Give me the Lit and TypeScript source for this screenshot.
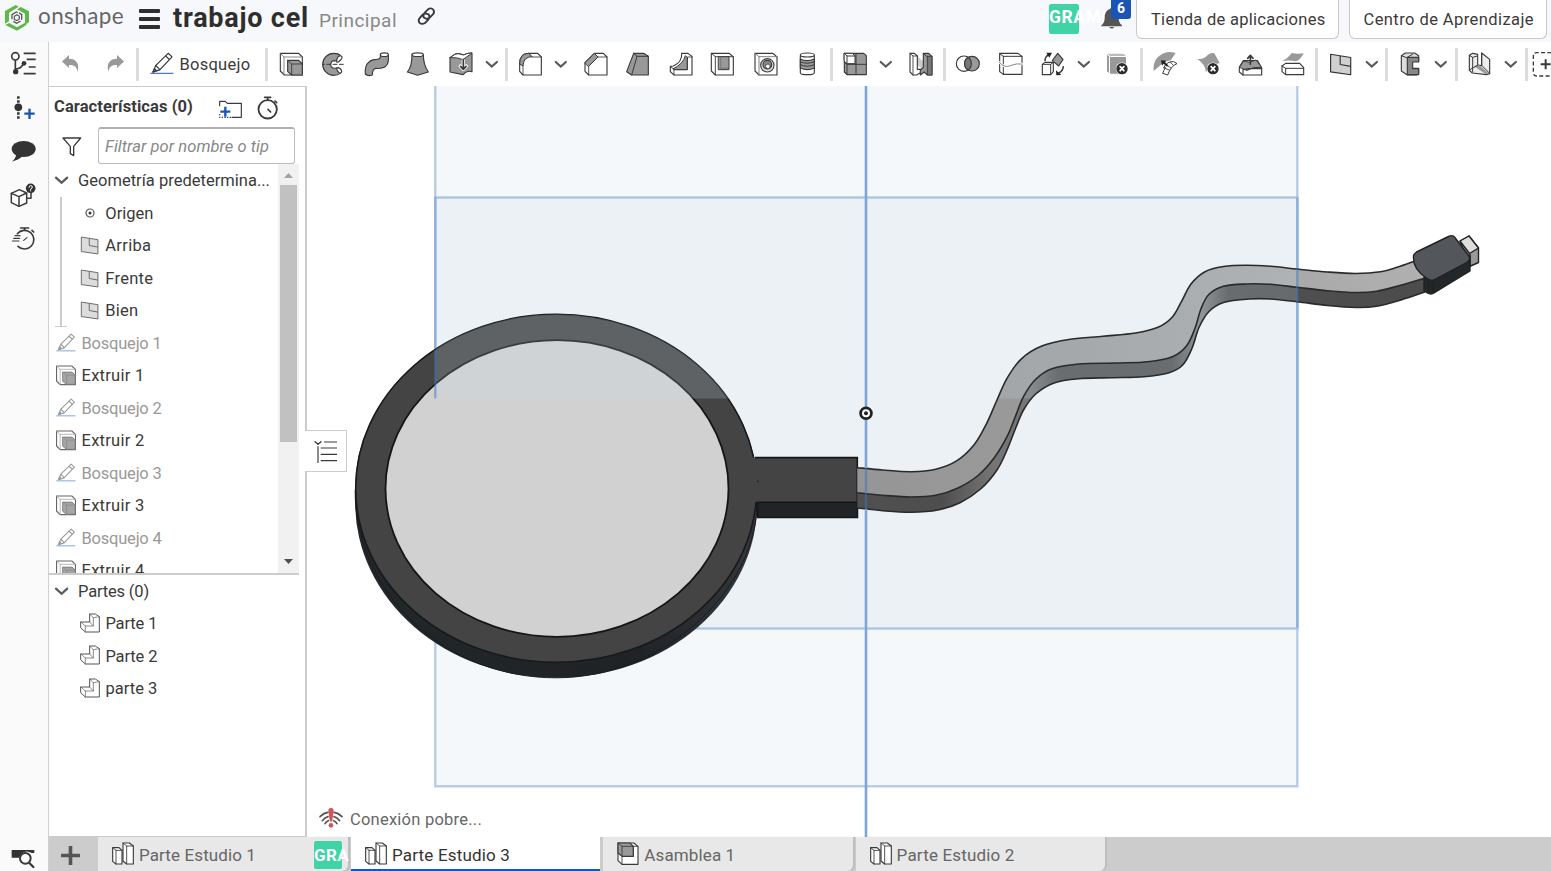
import { LitElement, html, svg, css } from "lit";
import { customElement, property } from "lit/decorators.js";

type Pt = [number, number];

/* Text run set to a given measure by spreading its tracking. */
@customElement("fit-text")
class FitText extends LitElement {
  @property({ type: Number }) w = 0;
  @property() text = "";
  static styles = css`
    :host { display: inline-block; white-space: pre; }
  `;
  render() {
    return html`<span class="run">${this.text}</span>`;
  }
  updated() {
    const run = this.renderRoot.querySelector(".run") as HTMLElement;
    run.style.letterSpacing = "0px";
    const natural = run.getBoundingClientRect().width;
    if (this.w && natural) run.style.letterSpacing = `${(this.w - natural) / this.text.length}px`;
  }
}

const t = (text: string, w: number) => html`<fit-text .text=${text} .w=${w}></fit-text>`;

/* Smooth curve through a list of points. */
const spline = (p: Pt[], move = true) => {
  let d = move ? `M${p[0]}` : `L${p[0]}`;
  for (let i = 0; i < p.length - 1; i++) {
    const a = p[Math.max(0, i - 1)], b = p[i], c = p[i + 1], e = p[Math.min(p.length - 1, i + 2)];
    d += `C${b[0] + (c[0] - a[0]) / 6},${b[1] + (c[1] - a[1]) / 6} ${c[0] - (e[0] - b[0]) / 6},${c[1] - (e[1] - b[1]) / 6} ${c[0]},${c[1]}`;
  }
  return d;
};

const cableTop: Pt[] = [[857.3,467.7],[882.7,470],[911,471.7],[935.7,469.3],[957,460.7],[974.5,444.3],[986.7,423.3],[997,400],[1007,378.3],[1021.4,358.8],[1041.8,346],[1070.4,339.3],[1103,336.3],[1135.7,333],[1158,327.3],[1172.4,317],[1181.4,301.7],[1191,284],[1205,271.7],[1223.5,266.5],[1246,265.2],[1270.4,266.3],[1297,269],[1327.5,272],[1356,273.5],[1380.6,271.7],[1397,267.3],[1415,261]];
const cableMid: Pt[] = [[857.3,492.7],[882.7,495.3],[911,497],[935.7,495.3],[958,488],[978.6,475],[995,456.7],[1007,436.7],[1015.3,416.7],[1023.5,396.7],[1035.7,379.3],[1052,368.8],[1078.6,364],[1115.3,363],[1148,361.7],[1172.4,356.7],[1186.7,345.7],[1195,328.3],[1201,308.8],[1209,294.3],[1223.5,286.2],[1246,284],[1270.4,284.3],[1297,287.3],[1327.5,290.7],[1356,292.5],[1376.5,291.3],[1397,286.3],[1424,278.5]];
const cableBot: Pt[] = [[857.3,508],[882.7,510.7],[911,512.2],[937.8,510],[960,502.7],[980.6,489],[997,470],[1007,450],[1015.3,429],[1023.5,410],[1035.7,394],[1054,382.9],[1078.6,378.7],[1111,377.7],[1144,376.7],[1168.4,373],[1182.7,365],[1192,348.3],[1199,327.5],[1209,311.5],[1223.5,302.5],[1250,299],[1270,299],[1297,301.7],[1327.5,305.5],[1356,307.5],[1376.5,306.3],[1401,300],[1425,292]];

/* Icon whose art is drawn three units to the pixel, unless another width is asked for. */
const ic = (x: number, y: number, size: number, art: unknown, h = size, px = size / 3) => html`<svg
  class="ic" width=${px} height=${(px * h) / size} viewBox="${x} ${y} ${size} ${h}"
  fill="none" stroke="#3a3a3a" stroke-width="3.4" stroke-linejoin="round" stroke-linecap="round">${art}</svg>`;

const tb = (x: number, art: unknown) => html`<span class="cell">${ic(x, 35, 72, art, 75)}</span>`;
const chevron = html`<svg width="15" height="9" viewBox="0 0 15 9" fill="none" stroke="#5a5a5a" stroke-width="2.300" stroke-linecap="round"><path d="M2 1.700 7.600 6.800 13.200 1.700"/></svg>`;
const smallChevron = html`<svg width="14" height="9" viewBox="0 0 14 9" fill="none" stroke="#5a5a5a" stroke-width="2.200" stroke-linecap="round"><path d="M1.700 2 6.800 6.500 11.900 2"/></svg>`;
const drop = html`<span class="drop">${smallChevron}</span>`;
const sep = html`<span class="sep"></span>`;
const cross = (x: number, y: number) => svg`<circle cx=${x} cy=${y} r="18.500" fill="#fff" stroke="none"/><circle cx=${x} cy=${y} r="17" fill="#2b2b2b" stroke="none"/><path stroke="#fff" stroke-width="5.500" d="M${x - 5.5} ${y - 6}l11 12m0-12l-11 12"/>`;

const extrudeArt = svg`
  <path fill="#fff" d="M59 39h55l11 11v54h-54l-12-12z"/>
  <path stroke="#777" stroke-width="2.600" d="M59 39l11 11h55M70 50v54"/>
  <path fill="#999" d="M81 60h33l11 11v33h-32l-12-10z"/>
  <path stroke-width="2.600" d="M81 60l12 11h32M93 71v33"/>`;

const treeExtrudeArt = svg`<g stroke="#666">
  <path fill="#fff" stroke-width="4" d="M58 38h55l13 12v55H71L58 92z"/>
  <path stroke="#aaa" stroke-width="3" d="M58 38l13 12h55M71 50v54"/>
  <path fill="#a5a5a5" stroke="#777" stroke-width="3" d="M81 60h33l11 11v33H94L81 94z"/>
  <path stroke="#888" stroke-width="2.600" d="M81 60l13 11h32M94 71v33"/></g>`;

const sketchIcon = (dim: boolean, w: number) => html`<svg class="ic" width=${w} height=${w} viewBox="448 156 74 74" fill="none" stroke=${dim ? "#999" : "#333"} stroke-width=${dim ? 4 : 3.6} stroke-linejoin="round">
  <path fill="#fff" d="M457 218l9-21 38-37 12 11-38 40z"/><path d="M457 218l10-5-5-6zM466 197l13 14M496 168l12 11"/>
  <path stroke=${dim ? "#8aaee0" : "#4a7cc9"} stroke-width="4" d="M449 222h71"/></svg>`;
const planeIcon = (w: number, dim: boolean) => html`<svg class="ic" width=${w} height=${w} viewBox="659 34 68 72" fill=${dim ? "#dcdcdc" : "#d0d0d0"} stroke=${dim ? "#666" : "#333"} stroke-width="3.600" stroke-linejoin="round"><path d="M662 38l63 10v54l-63-9z"/><path d="M692 43v27l33 6" fill="none"/></svg>`;

const studioArt = svg`
  <path fill="#fff" d="M338 817h19l9 8v41h-18l-10-8z"/><path stroke-width="2.600" d="M338 817l10 8h18M348 825v41"/>
  <path fill="#fff" d="M369 803h19l12 9v54h-20l-11-9z"/><path stroke-width="2.600" d="M369 803l11 9h20M380 812v54"/>`;

@customElement("app-root")
class AppRoot extends LitElement {
  static styles = css`
    :host { display: block; width: 1551px; height: 871px; overflow: hidden; background: #fff; color: #3a3a3a; font-family: Roboto, "Liberation Sans", sans-serif; font-size: 16.5px; }
    * { box-sizing: border-box; }
    .ic { display: block; flex: none; overflow: visible; }
    .app { display: grid; grid-template-rows: 42px minmax(0, 1fr); height: 871px; }
    .header { display: flex; align-items: flex-start; background: #f7f8fb; }
    .logo { margin: 4px 0 0 4px; }
    .brand { margin: 2px 0 0 8px; font-family: Lato, sans-serif; font-size: 22.5px; line-height: 28px; color: #666; }
    .burger { margin: 9px 0 0 15px; width: 21px; height: 20px; display: flex; flex-direction: column; justify-content: space-between; }
    .burger i { height: 4px; background: #2e2e2e; border-radius: 1px; }
    .title { margin: 0 0 0 13px; font-weight: 700; font-size: 27px; line-height: 36px; color: #2e2e2e; }
    .branch { margin: 6px 0 0 10px; font-size: 19px; line-height: 30px; color: #888; }
    .link { margin: 7px 0 0 20px; }
    .user { margin: 4px 0 0 auto; width: 30px; height: 30px; border-radius: 2px; background: #3fd3a6; color: #fff; font-weight: 700; font-size: 17.5px; line-height: 26px; white-space: nowrap; }
    .bell { position: relative; margin: 0 5px 0 22px; padding-top: 7px; width: 30px; height: 36px; }
    .count { position: absolute; left: 10px; top: -2px; width: 20px; height: 21px; border-radius: 3px; background: #1a55b3; color: #fff; font-weight: 700; font-size: 14px; line-height: 21px; text-align: center; }
    .btn { height: 39px; border: 1px solid #c8c8c8; border-top: 0; border-radius: 0 0 6px 6px; background: #fff; font-size: 16.5px; line-height: 39px; padding-left: 14px; white-space: nowrap; }
    .store { width: 203px; margin-right: 10px; }
    .learn { width: 198px; margin-right: 4px; padding-left: 13.5px; }
    .main { display: grid; grid-template-columns: 49px minmax(0, 1fr); }
    .rail { display: flex; flex-direction: column; align-items: center; background: #fafafa; border-right: 1px solid #d0d0d0; padding: 10px 2px 0 0; }
    .rail .slot { height: 43.6px; flex: none; display: flex; align-items: flex-start; }
    .rail .last { margin-top: auto; height: 23px; }
    .work { display: grid; grid-template-rows: 44px 751px 34px; min-width: 0; overflow: hidden; }
    .toolbar { display: flex; align-items: center; overflow: hidden; }
    .undo { margin-left: 13px; }
    .redo { margin-left: 26px; margin-right: 11px; }
    .sep { flex: none; width: 5.4px; height: 33px; display: flex; justify-content: center; }
    .sep::before { content: ""; width: 3px; background: #dcdcdc; }
    .sketch { display: flex; align-items: center; gap: 5px; margin: 0 13.8px 0 10px; }
    .cell { flex: none; width: 42.5px; display: flex; justify-content: center; padding-right: 0.6px; }
    .drop { flex: none; width: 22px; padding-left: 2.5px; }
    .drop svg { display: block; }
    .body { display: grid; grid-template-columns: 258px minmax(0, 1fr); position: relative; }
    .panel { display: flex; flex-direction: column; border: 1px solid #cbcbcb; border-left: 0; border-right: 2px solid #cbcbcb; overflow: hidden; }
    .phead { display: flex; align-items: center; height: 40px; padding: 0 0 1px 5px; font-weight: 700; }
    .phead .folder { margin: 5px 0 0 26px; }
    .phead .clock { margin: 3px 0 0 14px; }
    .search { display: flex; align-items: center; height: 37px; padding-left: 13px; }
    .field { margin-left: 16px; width: 197px; height: 37px; border: 1px solid #bdbdbd; border-top: 2px solid #b0b0b0; border-radius: 3px; padding-left: 6px; line-height: 35px; font-style: italic; color: #888; }
    .tree { display: grid; grid-template-columns: 229px 21px; height: 409px; flex: none; overflow: hidden; }
    .list { height: 409px; overflow: hidden; padding-top: 0.4px; }
    .row { display: flex; align-items: center; height: 32.5px; padding-left: 7px; gap: 5.5px; white-space: nowrap; }
    .row.top { padding-left: 5px; gap: 9px; }
    .row.dim { color: #999; }
    .kids { position: relative; }
    .kids .row { padding-left: 31px; gap: 6.3px; }
    .guide { position: absolute; left: 6px; top: 0; width: 12px; height: 130px; border-bottom: 1px solid #ccc; }
    .guide::before { content: ""; position: absolute; left: 5px; top: 0; height: 130px; width: 2px; background: #ccc; }
    .dot { width: 19px; display: flex; justify-content: center; }
    .bar { background: #f1f1f1; display: flex; flex-direction: column; align-items: center; justify-content: space-between; padding: 9px 0 9px; position: relative; }
    .thumb { position: absolute; left: 2px; top: 21px; width: 17px; height: 257px; background: #c1c1c1; }
    .parts { width: 250px; border-top: 2px solid #ccc; }
    .parts .item { padding-left: 31px; gap: 5.4px; }
    .canvas { position: relative; overflow: hidden; }
    .canvas .scene { display: block; }
    .net { position: absolute; left: 12px; top: 719px; display: flex; align-items: center; gap: 7px; height: 28px; color: #666; }
    .handle { position: absolute; left: 256px; top: 344px; width: 42px; height: 42px; background: #fff; border: 1px solid #ccc; border-left: 0; display: flex; align-items: center; justify-content: center; padding: 2px 0 0 1px; }
    .tabs { display: flex; background: #cccccc; }
    .add { width: 49px; display: flex; align-items: center; justify-content: center; padding: 3px 7px 0 0; }
    .tab { width: 249.3px; margin-right: 3px; display: flex; align-items: center; gap: 5px; padding: 2px 0 0 14px; background: #e8e8e8; color: #666; border-radius: 0 0 6px 0; font-size: 17px; box-shadow: 2px 0 1px #bdbdbd; }
    .tab.first { width: 250px; }
    .tab.on { background: #fff; color: #333; border-radius: 0; border-bottom: 2px solid #1a55b3; padding-top: 4px; box-shadow: none; }
    .tag { margin: 0 0 0 53px; width: 28px; height: 28px; background: #3fd3a6; color: #fff; font-weight: 700; line-height: 28px; overflow: visible; white-space: nowrap; border-radius: 2px; }
  `;

  toolbar() {
    return html`<div class="toolbar">
      <svg class="ic undo" width="18" height="19" viewBox="0 0 18 19" fill="#999"><path d="M0 6.500 7 0v3.800c7 0 11 4.500 8.500 13.500 0-5-3-7.500-8.500-7.300V13z"/></svg>
      <svg class="ic redo" width="18" height="19" viewBox="0 0 18 19" fill="#999"><path d="M18 6.500 11 0v3.800C4 3.800 0 8.300 2.500 17.300c0-5 3-7.500 8.500-7.300V13z"/></svg>
      ${sep}
      <span class="sketch">${sketchIcon(false, 24)}${t("Bosquejo", 71)}</span>
      ${sep}
      ${tb(55, extrudeArt)}
      ${tb(183, svg`<path fill="#999" d="M241 45q-6-6-20-6a33 33 0 0 0 0 66q12 0 20-6l3-7-12-10q-14 5-19-4-3-12 6-17l9 1z"/><path fill="#fff" d="M231 55q5-11 12-8t-1 12-12 6zM230 83q0 9 7 14 8 3 8-4t-9-11z"/><path stroke-width="3" stroke-linecap="butt" d="M186 72h8m5 0h14m5 0h14m5 0h14"/>`)}
      ${tb(310, svg`<path fill="#999" d="M359 44q2 12-10 13-16 0-24 8-13 9-11 36 8 8 21 3 0-18 10-20 32 3 37-17 2-8 1-24z"/><ellipse fill="#fff" cx="371" cy="43" rx="12" ry="5.500"/>`)}
      ${tb(438, svg`<path fill="#999" d="M456 43q0 35-14 52l31 10 32-10q-15-22-15-52z"/><ellipse fill="#fff" cx="473" cy="43" rx="17" ry="5.500"/>`)}
      ${tb(565, svg`<path fill="#999" d="M568 52l15-10q8-5 25 2 14-7 26-6v56q-15-5-27 9l-39-8z"/><path fill="#fff" stroke-width="3" d="M568 52l15-10q8-5 25 2 14-7 26-6l-27 20q-18-8-39-6z"/><path stroke="#fff" stroke-width="10" d="M608 60v22M599 77l9 10 9-10"/><path stroke-width="5" d="M608 57v27M600 78l8 9 8-9"/>`)}
      ${drop}${sep}
      ${tb(775, svg`<path fill="#fff" d="M780 70q0-31 27-31h27l11 11v54h-55l-10-11z"/><path fill="#999" stroke-width="3" d="M780 70q0-31 27-31l11 10q-27 0-28 27z"/><path stroke-width="2.600" d="M818 50h27M790 76v28"/>`)}
      ${drop}
      ${tb(968, svg`<path fill="#fff" d="M974 67l28-28h27l11 11v54h-55l-11-11z"/><path fill="#999" stroke-width="3" d="M974 67l28-28 11 11-28 28z"/><path stroke-width="2.600" d="M1013 50h27M985 78v26"/>`)}
      ${tb(1096, svg`<path fill="#999" d="M1122 39h30l14 9v56h-50l-15-10z"/><path stroke-width="3" d="M1122 39l10 9h34M1132 48l-16 56"/>`)}
      ${tb(1223, svg`<path fill="#fff" d="M1230 78l9-1q27-12 25-38h19l12 9v56h-54l-11-10z"/><path fill="#999" stroke-width="3" d="M1239 85q30-14 36-39l6 6v36h-33z"/><path stroke-width="2.600" d="M1230 78l11 10v16M1241 88h40V50h14"/>`)}
      ${tb(61, svg`<path fill="#fff" d="M65 39h54l12 11v54H77L65 92z"/><path stroke-width="2.800" d="M65 39l12 10h54M77 49v55"/><path fill="#999" stroke-width="3" d="M87 49h31v39H87z"/><path stroke-width="2" stroke="#666" d="M93 49v35h25"/>`)}
      ${tb(188, svg`<path fill="#fff" d="M194 39h54l12 11v54h-54l-12-12z"/><path stroke-width="2.800" stroke="#777" d="M194 39l12 10h54M206 49v55"/><circle cx="231" cy="75" r="20" fill="#ddd"/><circle cx="231" cy="73" r="13" fill="#888"/><circle cx="233" cy="78" r="7" fill="#fff" stroke-width="2.500"/>`)}
      ${tb(316, svg`<path fill="#fff" d="M332 46v51q0 6 21 6t21-6V46z"/><ellipse cx="353" cy="44" rx="21" ry="6" fill="#fff"/><path fill="#999" d="M332 56q20 10 42 0v27q-20 10-42 0z"/><path stroke-width="3" d="M332 64q20 10 42 0M332 73q20 10 42 0"/>`)}
      ${sep}
      ${tb(460, svg`<path fill="#999" d="M464 39h58l8 7v57h-58l-8-8z"/><path fill="#fff" stroke-width="3" d="M464 39h24l8 8v23h-24l-8-7z"/><path stroke-width="3" d="M464 39l8 8h24M472 47v56M499 40v63M464 66l8 6h58"/>`)}
      ${drop}
      ${tb(653, svg`<path fill="#ccc" stroke="none" d="M676 43l22 20v24l-22-16z"/><path fill="#fff" d="M659 39h13l9 8v40h12v9l-14 8h-11l-9-9z"/><path stroke-width="2.600" d="M659 39l9 8h13M668 47v57"/><path fill="#999" d="M699 39h16l10 9v56h-14l-9-9-12 9v-15l9-8z"/><path fill="#777" stroke-width="2.600" d="M699 39l9 9h17v56h-14V48"/>`)}
      ${sep}
      ${tb(797, svg`<circle cx="821" cy="70" r="23" fill="#fff"/><circle cx="845" cy="70" r="22" fill="#999"/><path fill="#777" d="M833 51a23 23 0 0 1 0 38a23 23 0 0 1 0-38z"/>`)}
      ${tb(924, svg`<path fill="#fff" d="M929 39h55l12 9v54h-56l-11-8z"/><path stroke-width="3" d="M929 40l11 8h56M940 48v54"/><path stroke="#fff" stroke-width="7" d="M928 66q15 18 33 10t35-5"/><path stroke-width="3" stroke="#888" d="M928 66q15 18 33 10t35-5"/>`)}
      ${tb(1052, svg`<path fill="#fff" d="M1056 72l8-6h25v28l-8 9h-25z"/><path stroke-width="3" d="M1056 72h25v31M1081 72l8-6"/><path fill="#999" d="M1102 39l16 18-13 20-19-16z"/><path stroke-width="4.500" d="M1064 61q1-12 10-18M1119 79q-2 14-13 19"/><path fill="#222" stroke="none" d="M1068 37h17l-8 15zM1097 90l16 14-15 1z"/>`)}
      ${drop}
      ${tb(1247, svg`<path fill="#bbb" stroke="none" d="M1254 40h48l8 7h-48z"/><path fill="#999" stroke="none" d="M1262 50h48v50h-48zM1253 43l6 5v50l-6-5z"/>${cross(1298, 85)}`)}
      ${sep}
      ${tb(129, svg`<path fill="#999" stroke="none" d="M131 92q-4-41 34-55 13-4 32 1l-15 22-20 5-14 13z"/><path fill="#fff" stroke-width="3" d="M161 82q10-20 30-18l10 6q-18 6-28 34l-15-5q3-10 8-16z"/><path stroke-width="2.600" d="M165 84l13 5M171 75l12 8M181 66l9 9"/><path fill="#222" stroke="none" d="M153 60l16 1-4 5 10 9-4 4-10-9-5 6z"/>`)}
      ${tb(256, svg`<path fill="#999" stroke="none" d="M259 55q18 5 32-11 10-8 20-5l16 29-28 10-13 17q-3-25-27-40z"/>${cross(307, 85)}`)}
      ${tb(384, svg`<path fill="#fff" d="M388 80l12-19h43l12 22v21h-56l-11-9z"/><path fill="#999" stroke-width="3" d="M389 80l12-18 17 4 20-7 17 22-25 1-18 8z"/><path d="M399 88v16M399 88l18-3h38"/><path stroke-width="5" d="M421 72V48M413 54l8-9 8 9"/>`)}
      ${tb(512, svg`<path fill="#999" stroke="none" d="M515 62q18-8 29-24 16 4 36 1-10 20-23 24-20-4-42-1z"/><path fill="#fff" d="M515 77l11-8h42l12 13v21h-54l-11-9z"/><path stroke-width="3" d="M515 77l11 7h54M526 84v19"/>`)}
      ${sep}
      <span class="cell">${planeIcon(23, false)}</span>
      ${drop}${sep}
      ${tb(867, svg`<path fill="#ddd" d="M877 46l12-8h28l12 8v16h-22v22h22v13l-6 7h-28l-18-12z"/><path fill="#888" d="M895 51h34v14h-18v20h18v18h-34z"/><path stroke-width="3" d="M877 46l18 7M895 51l17-10"/>`)}
      ${drop}${sep}
      ${tb(1075, svg`<path fill="#eee" d="M1079 45l10-6 15 3v32l12 2V38l24 19v43l-10 3-42-5-9-8z"/><path fill="#999" stroke="none" d="M1092 77l15-4 30 26-8 3z"/><path stroke-width="3" d="M1079 45l10 6v44M1089 51l14-4M1116 38v37l24 24M1079 89l26-15"/>`)}
      ${drop}${sep}
      ${ic(1273, 34, 72, svg`<path stroke-linecap="butt" stroke-width="4" stroke-dasharray="12 7" d="M1340 36h-44q-10 0-10 10v48q0 12 10 12h44"/><path stroke-width="6" stroke-linecap="butt" d="M1308 71h30M1323 56v30"/>`, 75)}
    </div>`;
  }

  rail() {
    return html`<div class="rail">
      <span class="slot">${ic(34, 156, 75, svg`<g stroke-width="5" stroke-linecap="butt"><circle cx="47" cy="169" r="11" fill="#fff"/><path d="M47 180v31M48 207q18 0 23-17M72 160h36M81 178h27M87 201h21M72 221h36"/></g><circle cx="48" cy="215" r="8" fill="#333" stroke="none"/><circle cx="73" cy="190" r="7" fill="#333" stroke="none"/>`)}</span>
      <span class="slot">${ic(34, 33, 75, svg`<path stroke-width="8" stroke-linecap="butt" stroke-dasharray="7 5" d="M56 34v68"/><circle cx="56" cy="67" r="11.500" fill="#333" stroke="none"/><path stroke="#1a55b3" stroke-width="7" stroke-linecap="butt" d="M74 86h31M89.500 71v31"/>`)}</span>
      <span class="slot">${ic(34, 162, 75, svg`<ellipse cx="72" cy="192" rx="36" ry="24" fill="#333" stroke="none"/><path fill="#333" stroke="none" d="M50 207q-2 14-13 23 20-5 31-16z"/>`)}</span>
      <span class="slot">${ic(34, 293, 75, svg`<g stroke-width="4.500"><path fill="#fff" d="M35 324l24-11 22 10v30l-23 10-23-11z"/><path d="M35 324l23 10 23-11M58 334v29M81 339h13v-16"/></g><circle cx="93" cy="309" r="14.500" fill="#333" stroke="none"/><path stroke="#fff" stroke-width="3" d="M88 306q0-5 5-5t5 4-5 6v2m0 3v1"/>`)}</span>
      <span class="slot">${ic(34, 423, 75, svg`<g stroke-width="5"><path d="M53 446a28 28 0 1 1 2 38"/><path d="M63 429h24M75 429v5M97 436l5 5"/><path stroke-width="3.500" d="M46 452h15M42 460h18M38 468h20M72 466l10-8"/></g>`)}</span>
      <span class="slot last">${ic(34, 819, 75, svg`<path fill="#333" stroke="none" d="M36 825h68v9H96a24 24 0 0 0-37 14H36z"/><circle cx="77" cy="850" r="16" stroke-width="6" fill="#fff"/><path stroke-width="7" d="M89 864l12 12"/>`, 66)}</span>
    </div>`;
  }

  scene() {
    const rev = (p: Pt[]) => [...p].reverse() as Pt[];
    const top = spline(cableTop) + spline(rev(cableMid), false) + "Z";
    const side = spline(cableMid) + spline(rev(cableBot), false) + "Z";
    return html`<svg class="scene" width="1244" height="751" viewBox="307 86 1244 751" fill="none">
      <defs>
        <linearGradient id="rim" x1="355" x2="757" y1="0" y2="0" gradientUnits="userSpaceOnUse"><stop offset="0" stop-color="#22272a"/><stop offset=".7" stop-color="#1f2326"/><stop offset=".87" stop-color="#2b2e33"/><stop offset="1" stop-color="#34383d"/></linearGradient>
        <linearGradient id="cab" x1="857" x2="1420" y1="0" y2="0" gradientUnits="userSpaceOnUse"><stop offset="0" stop-color="#959595"/><stop offset=".3" stop-color="#9a9a9a"/><stop offset=".6" stop-color="#a3a3a3"/><stop offset="1" stop-color="#b0b0b0"/></linearGradient>
        <linearGradient id="sid" x1="857" x2="1420" y1="0" y2="0" gradientUnits="userSpaceOnUse"><stop offset="0" stop-color="#505050"/><stop offset=".15" stop-color="#4e4e4e"/><stop offset=".24" stop-color="#747474"/><stop offset=".31" stop-color="#777"/><stop offset=".36" stop-color="#525252"/><stop offset=".56" stop-color="#525252"/><stop offset=".61" stop-color="#858585"/><stop offset=".66" stop-color="#505050"/><stop offset="1" stop-color="#4c4c4c"/></linearGradient>
        <clipPath id="solid"><ellipse cx="556.200" cy="488.300" rx="201" ry="174"/><path d=${top}/><path d=${side}/></clipPath>
      </defs>
      <rect x="435.300" y="70" width="862" height="716.300" fill="#f4f8fb" stroke="#b5cbe5" stroke-width="2.300"/>
      <rect x="435.300" y="197.500" width="862" height="431" fill="#ebf1f5" stroke="#a9c3e1" stroke-width="2.300"/>
      <path d="M435.300 197v201M1297.300 197v431" stroke="#8fb0da" stroke-width="2.300"/>
      <path d="M355.200 488.300a201 174 0 0 1 402 0v15a201 174.500 0 0 1-402 0z" fill="url(#rim)"/>
      <path d="M355.200 490q-.2 8 .8 18c10 95 95 169.800 200.200 169.800s199-85 201-174.300" stroke="#1c1e20"/>
      <ellipse cx="556.200" cy="488.300" rx="200.500" ry="174" fill="#444" stroke="#191919" stroke-width="1.600"/>
      <path d="M757.500 502h100v15.500h-100z" fill="#202427" stroke="#141414" stroke-width="1.500"/>
      <path d="M745 457.600h112.300V502H745z" fill="#444"/>
      <path d="M755 457.600h102.300V502.300H757.500v14" stroke="#161616" stroke-width="1.600"/>
      <circle cx="757.800" cy="481.300" r=".8" fill="#181818"/>
      <ellipse cx="557" cy="488.500" rx="171.500" ry="148.300" fill="#d1d1d1" stroke="#151515" stroke-width="1.800"/>
      <path d=${side} fill="url(#sid)"/>
      <path d=${top} fill="url(#cab)"/>
      <rect x="435.300" y="197.500" width="862" height="201" fill="#ccdae5" fill-opacity=".2" clip-path="url(#solid)"/>
      <g stroke="#2a2a2a" stroke-width="1.600"><path d=${spline(cableTop)}/><path d=${spline(cableMid)}/><path d=${spline(cableBot)}/></g>
      <path d="M435.300 350v48.500M1297.300 268v34M866 468v41" stroke="#3c75b9" stroke-opacity=".5" stroke-width="2.300"/>
      <path d="M866 86v382M866 509v328" stroke="#7fa5d5" stroke-width="2.600"/>
      <g stroke="#222" stroke-width="1.400" stroke-linejoin="round">
        <path d="M1460 241l9-5 9.500 12v14.500l-9 4z" fill="#999"/><path d="M1460 241l9-5 9.500 12-9 5.500z" fill="#ddd"/><path d="M1470 254v12"/>
        <path d="M1424 272l46-16v15l-36 22q-3 2-6.500 0l-3.500-2z" fill="#22272a"/>
        <path d="M1413.500 256q0-2 3-4l32-15.500q4-2 6 .500l14 18.500q3 4-2 7l-31 16.500q-5 3-9-1-14-9-13-22z" fill="#53575c"/>
        <path d="M1428.500 281v13M1433 281v12"/>
      </g>
      <circle cx="866" cy="413.200" r="5.400" stroke="#222" stroke-width="2.800" fill="#fff"/><circle cx="866" cy="413.200" r="2" fill="#222"/>
    </svg>`;
  }

  panel() {
    const feature = (n: number) => html`
      <div class="row dim">${sketchIcon(true, 20)}${t(`Bosquejo ${n}`, 80)}</div>
      <div class="row">${ic(56, 38, 72, treeExtrudeArt, 72, 20)}${t(`Extruir ${n}`, 63)}</div>`;
    const partIcon = ic(238, 115, 60, svg`<g stroke="#555" stroke-width="3"><path fill="#fff" d="M241 139h26v-24h17l12 8v46h-42l-13-12z"/><path stroke-width="2" d="M241 139l13 12h24v-25l18-3M254 151v18M267 115l11 11M267 139l11 12"/></g>`);
    return html`<div class="panel">
      <div class="phead">${t("Características (0)", 139)}
        <span class="folder">${ic(657, 43, 72, svg`<path stroke-width="3.500" d="M659 60V47h17l6 6h42v42h-28"/><path stroke-width="3.500" stroke-dasharray="4 4" stroke-linecap="butt" d="M659 85v10h36"/><path stroke="#1a55b3" stroke-width="7" stroke-linecap="butt" d="M661 78h30M676 63v30"/>`, 54)}</span>
        <span class="clock">${ic(770, 35, 66, svg`<circle cx="802" cy="75" r="27.500" stroke-width="5.500"/><path stroke-width="5" d="M793 39h18M802 40v6M824 50l5 5M803 75l8 8"/>`, 70)}</span>
      </div>
      <div class="search">${ic(187, 153, 60, svg`<path stroke-width="4" d="M190 159h53l-21 25v28l-10-6v-22z"/>`)}
        <div class="field">${t("Filtrar por nombre o tip", 164)}</div></div>
      <div class="tree">
        <div class="list">
          <div class="row top">${chevron}${t("Geometría predetermina...", 192)}</div>
          <div class="kids"><span class="guide"></span>
            <div class="row"><span class="dot"><svg width="10" height="10" viewBox="0 0 10 10"><circle cx="5" cy="5" r="4" fill="#fff" stroke="#555" stroke-width="1.200"/><circle cx="5" cy="5" r="1.500" fill="#333"/></svg></span>${t("Origen", 48)}</div>
            <div class="row">${planeIcon(19, true)}${t("Arriba", 46)}</div>
            <div class="row">${planeIcon(19, true)}${t("Frente", 48)}</div>
            <div class="row">${planeIcon(19, true)}${t("Bien", 33)}</div>
          </div>
          ${[1, 2, 3, 4].map(feature)}
        </div>
        <div class="bar"><svg width="9" height="5"><path d="M0 5 4.500 0 9 5z" fill="#a3a3a3"/></svg><span class="thumb"></span><svg width="9" height="5"><path d="M0 0h9L4.500 5z" fill="#505050"/></svg></div>
      </div>
      <div class="parts">
        <div class="row top">${chevron}${t("Partes (0)", 71)}</div>
        ${["Parte 1", "Parte 2", "parte 3"].map((p) => html`<div class="row item">${partIcon}${t(p, 52)}</div>`)}
      </div>
    </div>`;
  }

  render() {
    const studio = ic(336, 803, 66, studioArt, 70);
    return html`<div class="app">
      <div class="header">
        <svg class="ic logo" width="26" height="27" viewBox="12 11 78 81" fill="none">
          <path fill="#5cb947" d="M15 32l32-18 9 5-29 18v26l-12 7zM62 20l25 13v33l-12 7V40l-24-13zM16 74l11-6 24 13 28-16v9L51 91z"/>
          <path stroke="#555" stroke-width="4" d="M36 57V43l13-8 4 2M57 37l8 6v15M62 62l-12 7-10-6"/><path stroke="#555" stroke-width="3.500" d="M43 58V48l8-5 7 5v8l-7 5z"/>
        </svg>
        <span class="brand">${t("onshape", 86)}</span>
        <span class="burger"><i></i><i></i><i></i></span>
        <span class="title">${t("trabajo cel", 136)}</span>
        <span class="branch">${t("Principal", 78)}</span>
        <span class="link">${ic(1252, 22, 57, svg`<g stroke-width="5.500"><path d="M1272 53q-3-8 4-15l9-9q9-6 16 1 5 8-2 15l-8 8q-8 7-16 2M1287 44q5 8-1 16l-10 10q-9 6-17-1-5-8 2-15l8-9q7-6 14-2"/></g>`)}</span>
        <div class="user">${t("GRAMO", 65)}</div>
        <div class="bell">${ic(213, 22, 63, svg`<path fill="#555" stroke="none" d="M214 77q10-6 10-22 0-23 16-27 5-7 10 0 16 4 16 27 0 16 10 22v3h-62zM237 82h16q-7 9-16 0z"/>`, 72)}<span class="count">6</span></div>
        <div class="btn store">${t("Tienda de aplicaciones", 174.5)}</div>
        <div class="btn learn">${t("Centro de Aprendizaje", 170.5)}</div>
      </div>
      <div class="main">
        ${this.rail()}
        <div class="work">
          ${this.toolbar()}
          <div class="body">
            ${this.panel()}
            <div class="canvas">${this.scene()}
              <div class="net">${ic(958, 700, 72, svg`<g stroke="#555" stroke-width="5"><path d="M961 723q12-12 24-13M1027 723q-12-12-24-13M968 735q8-10 17-12M1020 735q-8-10-17-12M976 744q4-7 10-9M1012 744q-4-7-10-9" /></g><path fill="#d0555c" stroke="none" d="M986 703q0-6 8-6t8 6l-4 33q-4 4-8 0z"/><circle cx="994" cy="749" r="7" fill="#d0555c" stroke="none"/>`, 63)}${t("Conexión pobre...", 132)}</div>
            </div>
            <div class="handle">${ic(942, 333, 72, svg`<path stroke-width="4" d="M945 338l9 8 9-8"/><g stroke-width="3.500" stroke-linecap="butt"><path d="M972 339h39M962 357h49M962 376h49M962 395h49M954 352v50"/></g>`)}</div>
          </div>
          <div class="tabs">
            <div class="add"><svg width="19" height="19" viewBox="0 0 19 19"><path d="M9.500 0v19M0 9.500h19" stroke="#555" stroke-width="3.600"/></svg></div>
            <div class="tab first">${studio}${t("Parte Estudio 1", 117)}<span class="tag">${t("GRA", 35)}</span></div>
            <div class="tab on">${studio}${t("Parte Estudio 3", 118)}</div>
            <div class="tab">${ic(0, 3, 66, svg`<path fill="#fff" d="M3 3h48l12 11v53H15L3 56z"/><path fill="#999" d="M3 3h36l10 10v30H15L3 33z"/><path stroke-width="2.600" d="M3 3l12 10h48M15 13v54M49 13v30"/>`, 70)}${t("Asamblea 1", 91)}</div>
            <div class="tab">${studio}${t("Parte Estudio 2", 118)}</div>
          </div>
        </div>
      </div>
    </div>`;
  }
}
